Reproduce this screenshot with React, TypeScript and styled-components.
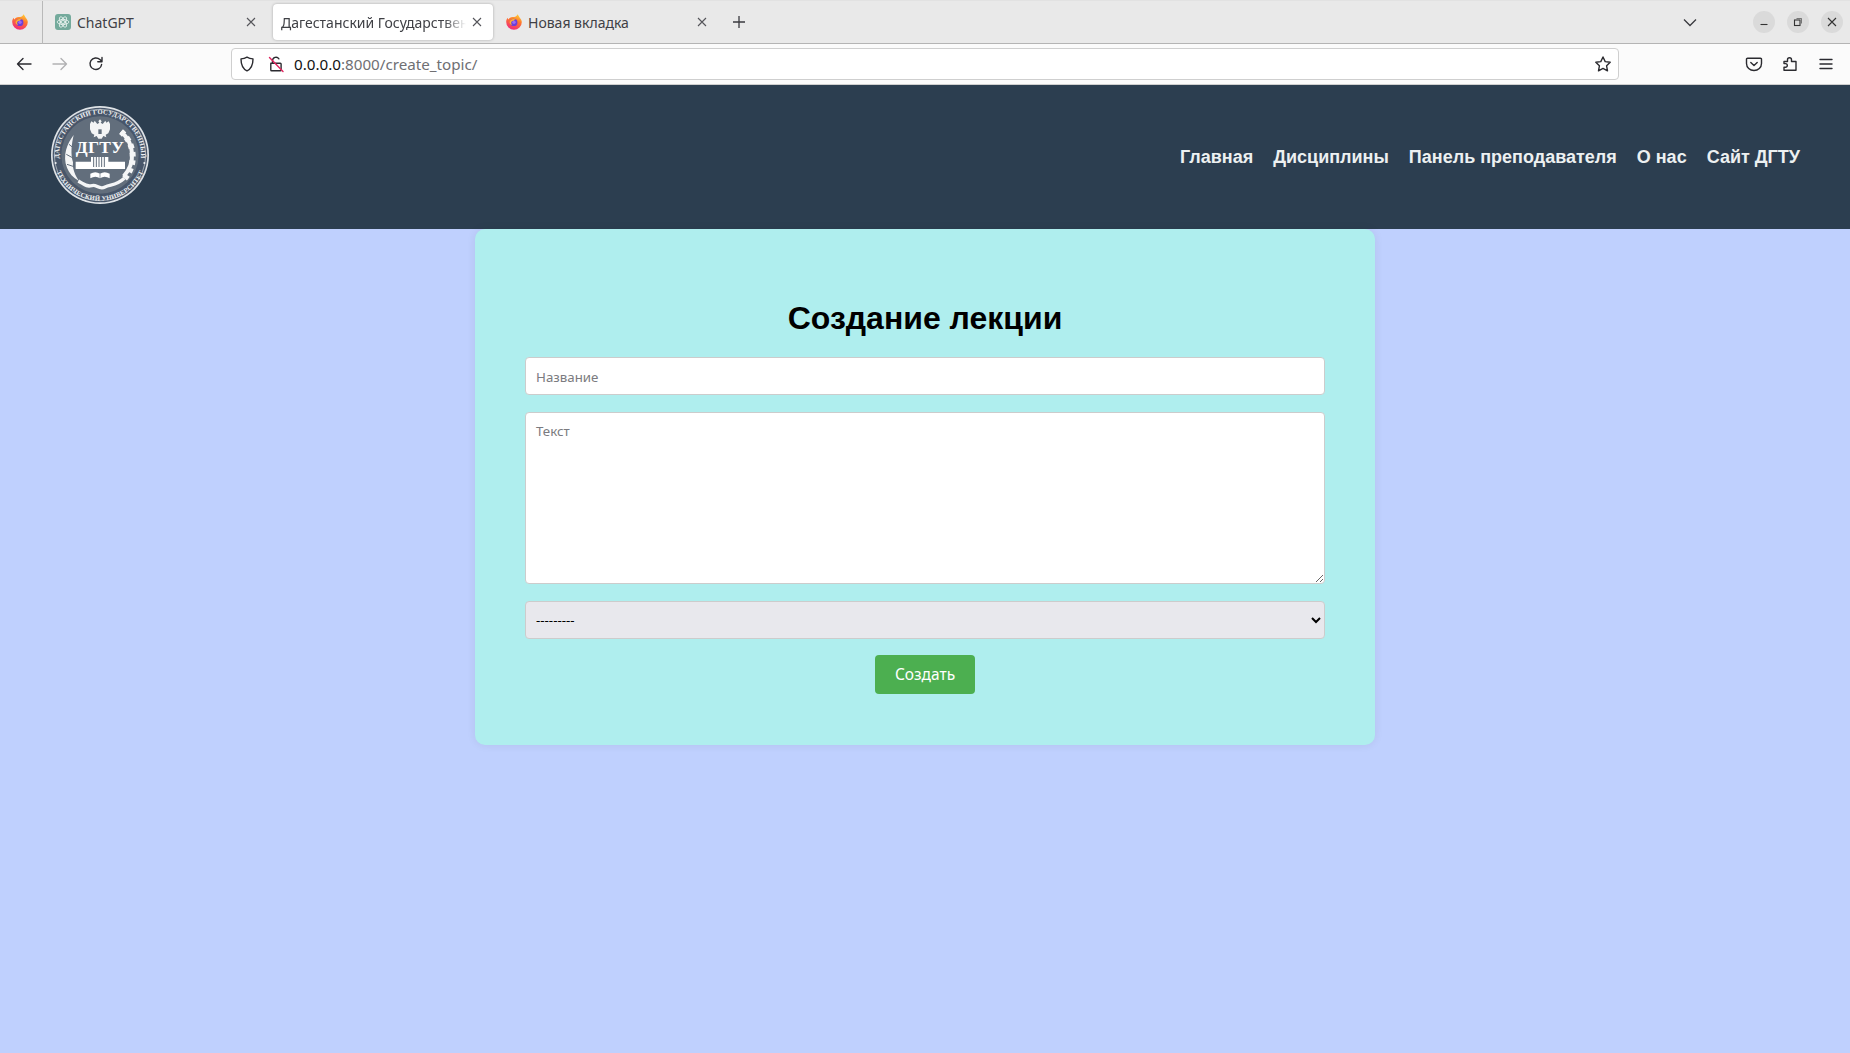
import React from "react";
import styled, { createGlobalStyle } from "styled-components";

const Global = createGlobalStyle`
  html, body { margin: 0; padding: 0; height: 100%; }
  body { background: #bfd0fe; font-family: "Noto Sans", "Open Sans", sans-serif; overflow: hidden; }
  * { box-sizing: border-box; }
`;

const Shell = styled.div`
  display: flex;
  flex-direction: column;
  height: 1053px;
  width: 1850px;
`;

const TabStrip = styled.div`
  display: flex;
  align-items: center;
  height: 44px;
  flex: none;
  background: #e9e9e9;
  border-top: 1px solid #e2e2e2;
  border-bottom: 1px solid #b4b4b4;
`;

const ViewButton = styled.div`
  width: 43px;
  height: 43px;
  display: flex;
  align-items: center;
  justify-content: center;
  border-right: 1px solid #b9b9b9;
  margin-right: 1px;
  padding-right: 2px;
`;

const Tab = styled.div<{ $active?: boolean; $w: number; $gap: number }>`
  width: ${(p) => p.$w}px;
  height: 36px;
  margin-right: ${(p) => p.$gap}px;
  padding: 0 ${(p) => (p.$active ? 11 : 10)}px 0 ${(p) => (p.$active ? 8 : 11)}px;
  display: flex;
  align-items: center;
  gap: 6px;
  border-radius: 4px;
  background: ${(p) => (p.$active ? "#ffffff" : "transparent")};
  box-shadow: ${(p) => (p.$active ? "0 0 3px rgba(0,0,0,.28)" : "none")};
`;

const TabTitle = styled.span<{ $fade?: boolean }>`
  flex: 1;
  min-width: 0;
  font-size: 14px;
  line-height: 20px;
  padding-top: 1px;
  color: #3f4045;
  white-space: nowrap;
  overflow: hidden;
  ${(p) =>
    p.$fade
      ? "-webkit-mask-image: linear-gradient(to right, #000 88%, transparent 100%); mask-image: linear-gradient(to right, #000 88%, transparent 100%);"
      : ""}
`;

const NewTab = styled.div`
  width: 24px;
  height: 24px;
  display: flex;
  align-items: center;
  justify-content: center;
  margin-left: 3px;
`;

const Spacer = styled.div`
  flex: 1;
`;

const WindowControls = styled.div`
  display: flex;
  align-items: center;
  gap: 12px;
  padding-right: 7px;
`;

const WindowButton = styled.div`
  width: 22px;
  height: 22px;
  border-radius: 50%;
  background: #dadada;
  display: flex;
  align-items: center;
  justify-content: center;
`;

const ListChevron = styled.div`
  display: flex;
  margin-right: 56px;
`;

const Toolbar = styled.div`
  display: flex;
  align-items: center;
  height: 41px;
  flex: none;
  background: #fbfbfb;
  border-bottom: 1px solid #cfcfcf;
  padding-left: 15px;
`;

const NavIcons = styled.div`
  display: flex;
  gap: 18px;
  width: 216px;
`;

const UrlBar = styled.div`
  width: 1388px;
  height: 32px;
  background: #fff;
  border: 1px solid #cfcfcf;
  border-radius: 4px;
  display: flex;
  align-items: center;
  padding: 0 6px 0 6px;
  gap: 11px;
`;

const UrlText = styled.div`
  flex: 1;
  font-size: 15.2px;
  color: #6f6f73;
  margin-left: -2px;
`;

const UrlHost = styled.span`
  color: #111;
`;

const RightIcons = styled.div`
  display: flex;
  gap: 18px;
  margin-left: 126px;
`;

const PageHeader = styled.header`
  height: 144px;
  flex: none;
  background: #2c3e50;
  display: flex;
  align-items: center;
  justify-content: space-between;
  padding: 0 50px;
`;

const Logo = styled.div`
  width: 100px;
  height: 100px;
  margin-bottom: 4px;
`;

const NavLinks = styled.nav`
  display: flex;
  gap: 20px;
  padding-top: 1px;
`;

const NavLink = styled.a`
  color: #ecf0f1;
  font: bold 18px "Liberation Sans", Arial, sans-serif;
  text-decoration: none;
`;

const Main = styled.main`
  flex: 1;
  background: #bfd0fe;
  display: flex;
  justify-content: center;
  align-items: flex-start;
`;

const Card = styled.form`
  width: 900px;
  height: 516px;
  background: #afeeee;
  border-radius: 10px;
  box-shadow: 0 0 10px rgba(0, 0, 0, 0.07);
  padding: 71px 50px 0;
  display: flex;
  flex-direction: column;
`;

const Title = styled.h1`
  margin: 0 0 20px;
  text-align: center;
  font: bold 32px/37px "Liberation Sans", Arial, sans-serif;
  color: #000;
`;

const fieldCss = `
  width: 100%;
  border: 1px solid #ccc;
  border-radius: 4px;
  font-family: "Noto Sans", "Open Sans", sans-serif;
  font-size: 13.3px;
  outline: none;
  display: block;
`;

const TextInput = styled.input`
  ${fieldCss}
  height: 38px;
  padding: 11px 10px 9px;
  margin-bottom: 17px;
  background: #fff;
  &::placeholder { color: #7b7b80; opacity: 1; }
`;

const TextArea = styled.textarea`
  ${fieldCss}
  height: 172px;
  padding: 9px 10px;
  margin-bottom: 17px;
  background: #fff;
  resize: both;
  &::placeholder { color: #7b7b80; opacity: 1; }
`;

const Select = styled.select`
  ${fieldCss}
  height: 38px;
  padding: 0 6px;
  margin-bottom: 16px;
  background-color: #e8e8ed;
  color: #000;
`;

const Submit = styled.button`
  align-self: center;
  width: 100px;
  height: 39px;
  border: none;
  border-radius: 4px;
  padding: 0 0 2px;
  background: #4caf50;
  color: #fff;
  font-family: "Noto Sans", "Open Sans", sans-serif;
  font-size: 15.5px;
`;

const Firefox = ({ id }: { id: string }) => (
  <svg width="16" height="16" viewBox="0 0 16 16" style={{ flex: "none" }}>
    <defs>
      <linearGradient id={id} x1="0.75" y1="0" x2="0.35" y2="1">
        <stop offset="0" stopColor="#ffd23a" />
        <stop offset="0.4" stopColor="#ff7a2b" />
        <stop offset="1" stopColor="#f0287c" />
      </linearGradient>
    </defs>
    <path d="M11.6 0.2c.9 1.1 1.4 2.2 2 3.2.9 1.3 2.2 2.7 2.2 4.6a7.8 7.8 0 1 1-15.6 0c0-1.7.5-3.2 1.4-4.3.1.8.4 1.4.9 1.8.6-1.4 2.2-2.4 4.2-2.5 2.2-.1 4.2-.6 4.9-2.8z" fill={`url(#${id})`} />
    <circle cx="7.8" cy="8.4" r="3.6" fill="#6d3fd6" />
    <circle cx="8" cy="8.2" r="1.7" fill="#9a6af5" />
    <path d="M3.6 7.8c1-2.6 4-3.7 6.6-2.8-1.2.2-2 .8-2.3 1.7-1.3.1-2.3.3-2.6 1.3-.5 1.3.2 2.6 1.2 3.3-2-.3-3.2-1.6-2.9-3.5z" fill="#ffb02e" />
  </svg>
);

const ChatGptIcon = () => (
  <svg width="16" height="16" viewBox="0 0 16 16" style={{ flex: "none" }}>
    <rect width="16" height="16" rx="3" fill="#74aa9c" />
    <g fill="none" stroke="#f2f8f6" strokeWidth="0.75">
      <circle cx="8" cy="8" r="1.6" />
      <ellipse cx="8" cy="8" rx="5.8" ry="2.5" />
      <ellipse cx="8" cy="8" rx="5.8" ry="2.5" transform="rotate(60 8 8)" />
      <ellipse cx="8" cy="8" rx="5.8" ry="2.5" transform="rotate(120 8 8)" />
    </g>
  </svg>
);

const Close = ({ size = 10, stroke = "#55555a" }: { size?: number; stroke?: string }) => (
  <svg width={size} height={size} viewBox="0 0 10 10" style={{ flex: "none" }}>
    <path d="M1 1l8 8M9 1l-8 8" stroke={stroke} strokeWidth="1.1" />
  </svg>
);

const Icon = ({ children, op = 1 }: { children: React.ReactNode; op?: number }) => (
  <svg width="18" height="18" viewBox="0 0 18 18" fill="none" stroke="#2b2b30" strokeWidth="1.4" strokeLinecap="round" strokeLinejoin="round" style={{ opacity: op, flex: "none" }}>
    {children}
  </svg>
);

const Seal = () => (
  <svg width="100" height="100" viewBox="15 12 300 300">
    <defs>
      <path id="sealTop" d="M43 178a123 123 0 1 1 244 0" />
      <path id="sealBot" d="M26 182a141 141 0 0 0 278 0" />
    </defs>
    <circle cx="165" cy="162" r="147" fill="#dfe3e7" />
    <circle cx="165" cy="162" r="142" fill="#48566a" />
    <circle cx="165" cy="162" r="137" fill="none" stroke="#cfd5da" strokeWidth="2" />
    <circle cx="165" cy="162" r="116" fill="#626e7c" />
    <text fill="#eef0f2" fontSize="20" fontFamily="Liberation Serif, serif" fontWeight="bold" letterSpacing=".5">
      <textPath href="#sealTop" startOffset="50%" textAnchor="middle">ДАГЕСТАНСКИЙ ГОСУДАРСТВЕННЫЙ</textPath>
    </text>
    <text fill="#eef0f2" fontSize="20" fontFamily="Liberation Serif, serif" fontWeight="bold" letterSpacing=".5">
      <textPath href="#sealBot" startOffset="50%" textAnchor="middle">ТЕХНИЧЕСКИЙ УНИВЕРСИТЕТ</textPath>
    </text>
    <circle cx="32" cy="186" r="3" fill="#eef0f2" />
    <circle cx="298" cy="186" r="3" fill="#eef0f2" />
    <path d="M165 55l-5 6 3 4-6 4-8-10-3 6-7-4-4 8 0 16 5 12 8 4-2 8 9-4 5 8h10l5-8 9 4-2-8 8-4 5-12 0-16-4-8-7 4-3-6-8 10-6-4 3-4z" fill="#f4f5f6" />
    <path d="M160 85h10v14h-10z" fill="#626e7c" />
    <path d="M86 102c-20 26-34 62-20 98 6 16 18 30 36 40-12-18-20-36-18-56-8-26-4-56 2-82z" fill="#f4f5f6" />
    <path d="M72 130l12 10M64 160l18 10M66 190l18 6" stroke="#626e7c" strokeWidth="3" />
    <path d="M228 92a92 92 0 0 1 8 134" fill="none" stroke="#f4f5f6" strokeWidth="12" />
    <path d="M228 92a99 99 0 0 1 8 144" fill="none" stroke="#f4f5f6" strokeWidth="18" strokeDasharray="13 11" />
    <path d="M100 240c18 10 24 18 40 14 14-6 22 14 40 4 18-8 34-4 58-26" fill="none" stroke="#f4f5f6" strokeWidth="10" />
    <text x="165" y="156" textAnchor="middle" fill="#fff" fontSize="52" fontWeight="bold" fontFamily="Liberation Serif, serif" letterSpacing="1" textLength="146" lengthAdjust="spacingAndGlyphs">ДГТУ</text>
    <path d="M92 182h46v-14h52v14h50v22H92z" fill="#fff" />
    <path d="M146 168v30M154 168v30M162 168v30M170 168v30M178 168v30" stroke="#626e7c" strokeWidth="3" />
    <path d="M136 232c10-6 20-6 29 0 9-6 19-6 29 0v-14c-10-6-20-6-29 0-9-6-19-6-29 0z" fill="#fff" />
    <path d="M165 218v14" stroke="#626e7c" strokeWidth="2" />
  </svg>
);

export default function App() {
  return (
    <Shell>
      <Global />
      <TabStrip>
        <ViewButton>
          <Firefox id="ff-a" />
        </ViewButton>
        <Tab $w={222} $gap={7}>
          <ChatGptIcon />
          <TabTitle>ChatGPT</TabTitle>
          <Close />
        </Tab>
        <Tab $active $w={220} $gap={2}>
          <TabTitle $fade>Дагестанский Государственный</TabTitle>
          <Close />
        </Tab>
        <Tab $w={222} $gap={7}>
          <Firefox id="ff-b" />
          <TabTitle>Новая вкладка</TabTitle>
          <Close />
        </Tab>
        <NewTab>
          <svg width="14" height="14" viewBox="0 0 14 14">
            <path d="M7 1v12M1 7h12" stroke="#3a3a3f" strokeWidth="1.3" />
          </svg>
        </NewTab>
        <Spacer />
        <ListChevron>
          <svg width="14" height="9" viewBox="0 0 14 9" fill="none">
            <path d="M1 1.5l6 6 6-6" stroke="#3a3a3f" strokeWidth="1.3" />
          </svg>
        </ListChevron>
        <WindowControls>
          <WindowButton>
            <svg width="10" height="10" viewBox="0 0 10 10">
              <path d="M1.5 7.5h7" stroke="#333" strokeWidth="1.1" />
            </svg>
          </WindowButton>
          <WindowButton>
            <svg width="10" height="10" viewBox="0 0 10 10" fill="none" stroke="#333">
              <rect x="1.5" y="3" width="5.5" height="5.5" strokeWidth="1.1" />
              <path d="M3.5 1.5h5v5" strokeWidth=".6" />
            </svg>
          </WindowButton>
          <WindowButton>
            <Close stroke="#333" />
          </WindowButton>
        </WindowControls>
      </TabStrip>
      <Toolbar>
        <NavIcons>
          <Icon>
            <path d="M16 9H2.5M8 3.5L2.5 9 8 14.5" />
          </Icon>
          <Icon op={0.35}>
            <path d="M2 9h13.5M10 3.5L15.5 9 10 14.5" />
          </Icon>
          <Icon>
            <path d="M14.6 9.5A5.8 5.8 0 1 1 12.9 4.6L15 6.6M15 2.5v4.2h-4.2" />
          </Icon>
        </NavIcons>
        <UrlBar>
          <Icon>
            <path d="M9 2.2c2 1.2 3.8 1.6 6 1.7 0 5.2-1.2 9.5-6 12-4.8-2.5-6-6.8-6-12 2.2-.1 4-.5 6-1.7z" />
          </Icon>
          <Icon>
            <path d="M5.5 8V5.7a3.5 3.5 0 0 1 6.4-1.9M3.8 8.2h9.5a.8.8 0 0 1 .8.8v6a.8.8 0 0 1-.8.8H4.6a.8.8 0 0 1-.8-.8z" />
            <path d="M2.5 2.5l13.5 14" stroke="#e0245e" />
          </Icon>
          <UrlText>
            <UrlHost>0.0.0.0</UrlHost>:8000/create_topic/
          </UrlText>
          <Icon>
            <path d="M9 2l2.2 4.6 5 .7-3.6 3.5.9 5L9 13.4l-4.5 2.4.9-5-3.6-3.5 5-.7z" />
          </Icon>
        </UrlBar>
        <RightIcons>
          <Icon>
            <path d="M2.5 3.2h13a1 1 0 0 1 1 1v4.3c0 4-3.3 7-7.5 7s-7.5-3-7.5-7V4.2a1 1 0 0 1 1-1z" />
            <path d="M5.8 7.5L9 10.6l3.2-3.1" />
          </Icon>
          <Icon>
            <path d="M3 6.5h3.5V4.7a2 2 0 0 1 4 0v1.8H15v8.7H3v-3h1.5a1.8 1.8 0 0 0 0-3.6H3z" />
          </Icon>
          <Icon>
            <path d="M3 4.5h12M3 9h12M3 13.5h12" />
          </Icon>
        </RightIcons>
      </Toolbar>
      <PageHeader>
        <Logo>
          <Seal />
        </Logo>
        <NavLinks>
          <NavLink href="#">Главная</NavLink>
          <NavLink href="#">Дисциплины</NavLink>
          <NavLink href="#">Панель преподавателя</NavLink>
          <NavLink href="#">О нас</NavLink>
          <NavLink href="#">Сайт ДГТУ</NavLink>
        </NavLinks>
      </PageHeader>
      <Main>
        <Card onSubmit={(e) => e.preventDefault()}>
          <Title>Создание лекции</Title>
          <TextInput placeholder="Название" />
          <TextArea placeholder="Текст" />
          <Select defaultValue="">
            <option value="">---------</option>
          </Select>
          <Submit type="submit">Создать</Submit>
        </Card>
      </Main>
    </Shell>
  );
}
